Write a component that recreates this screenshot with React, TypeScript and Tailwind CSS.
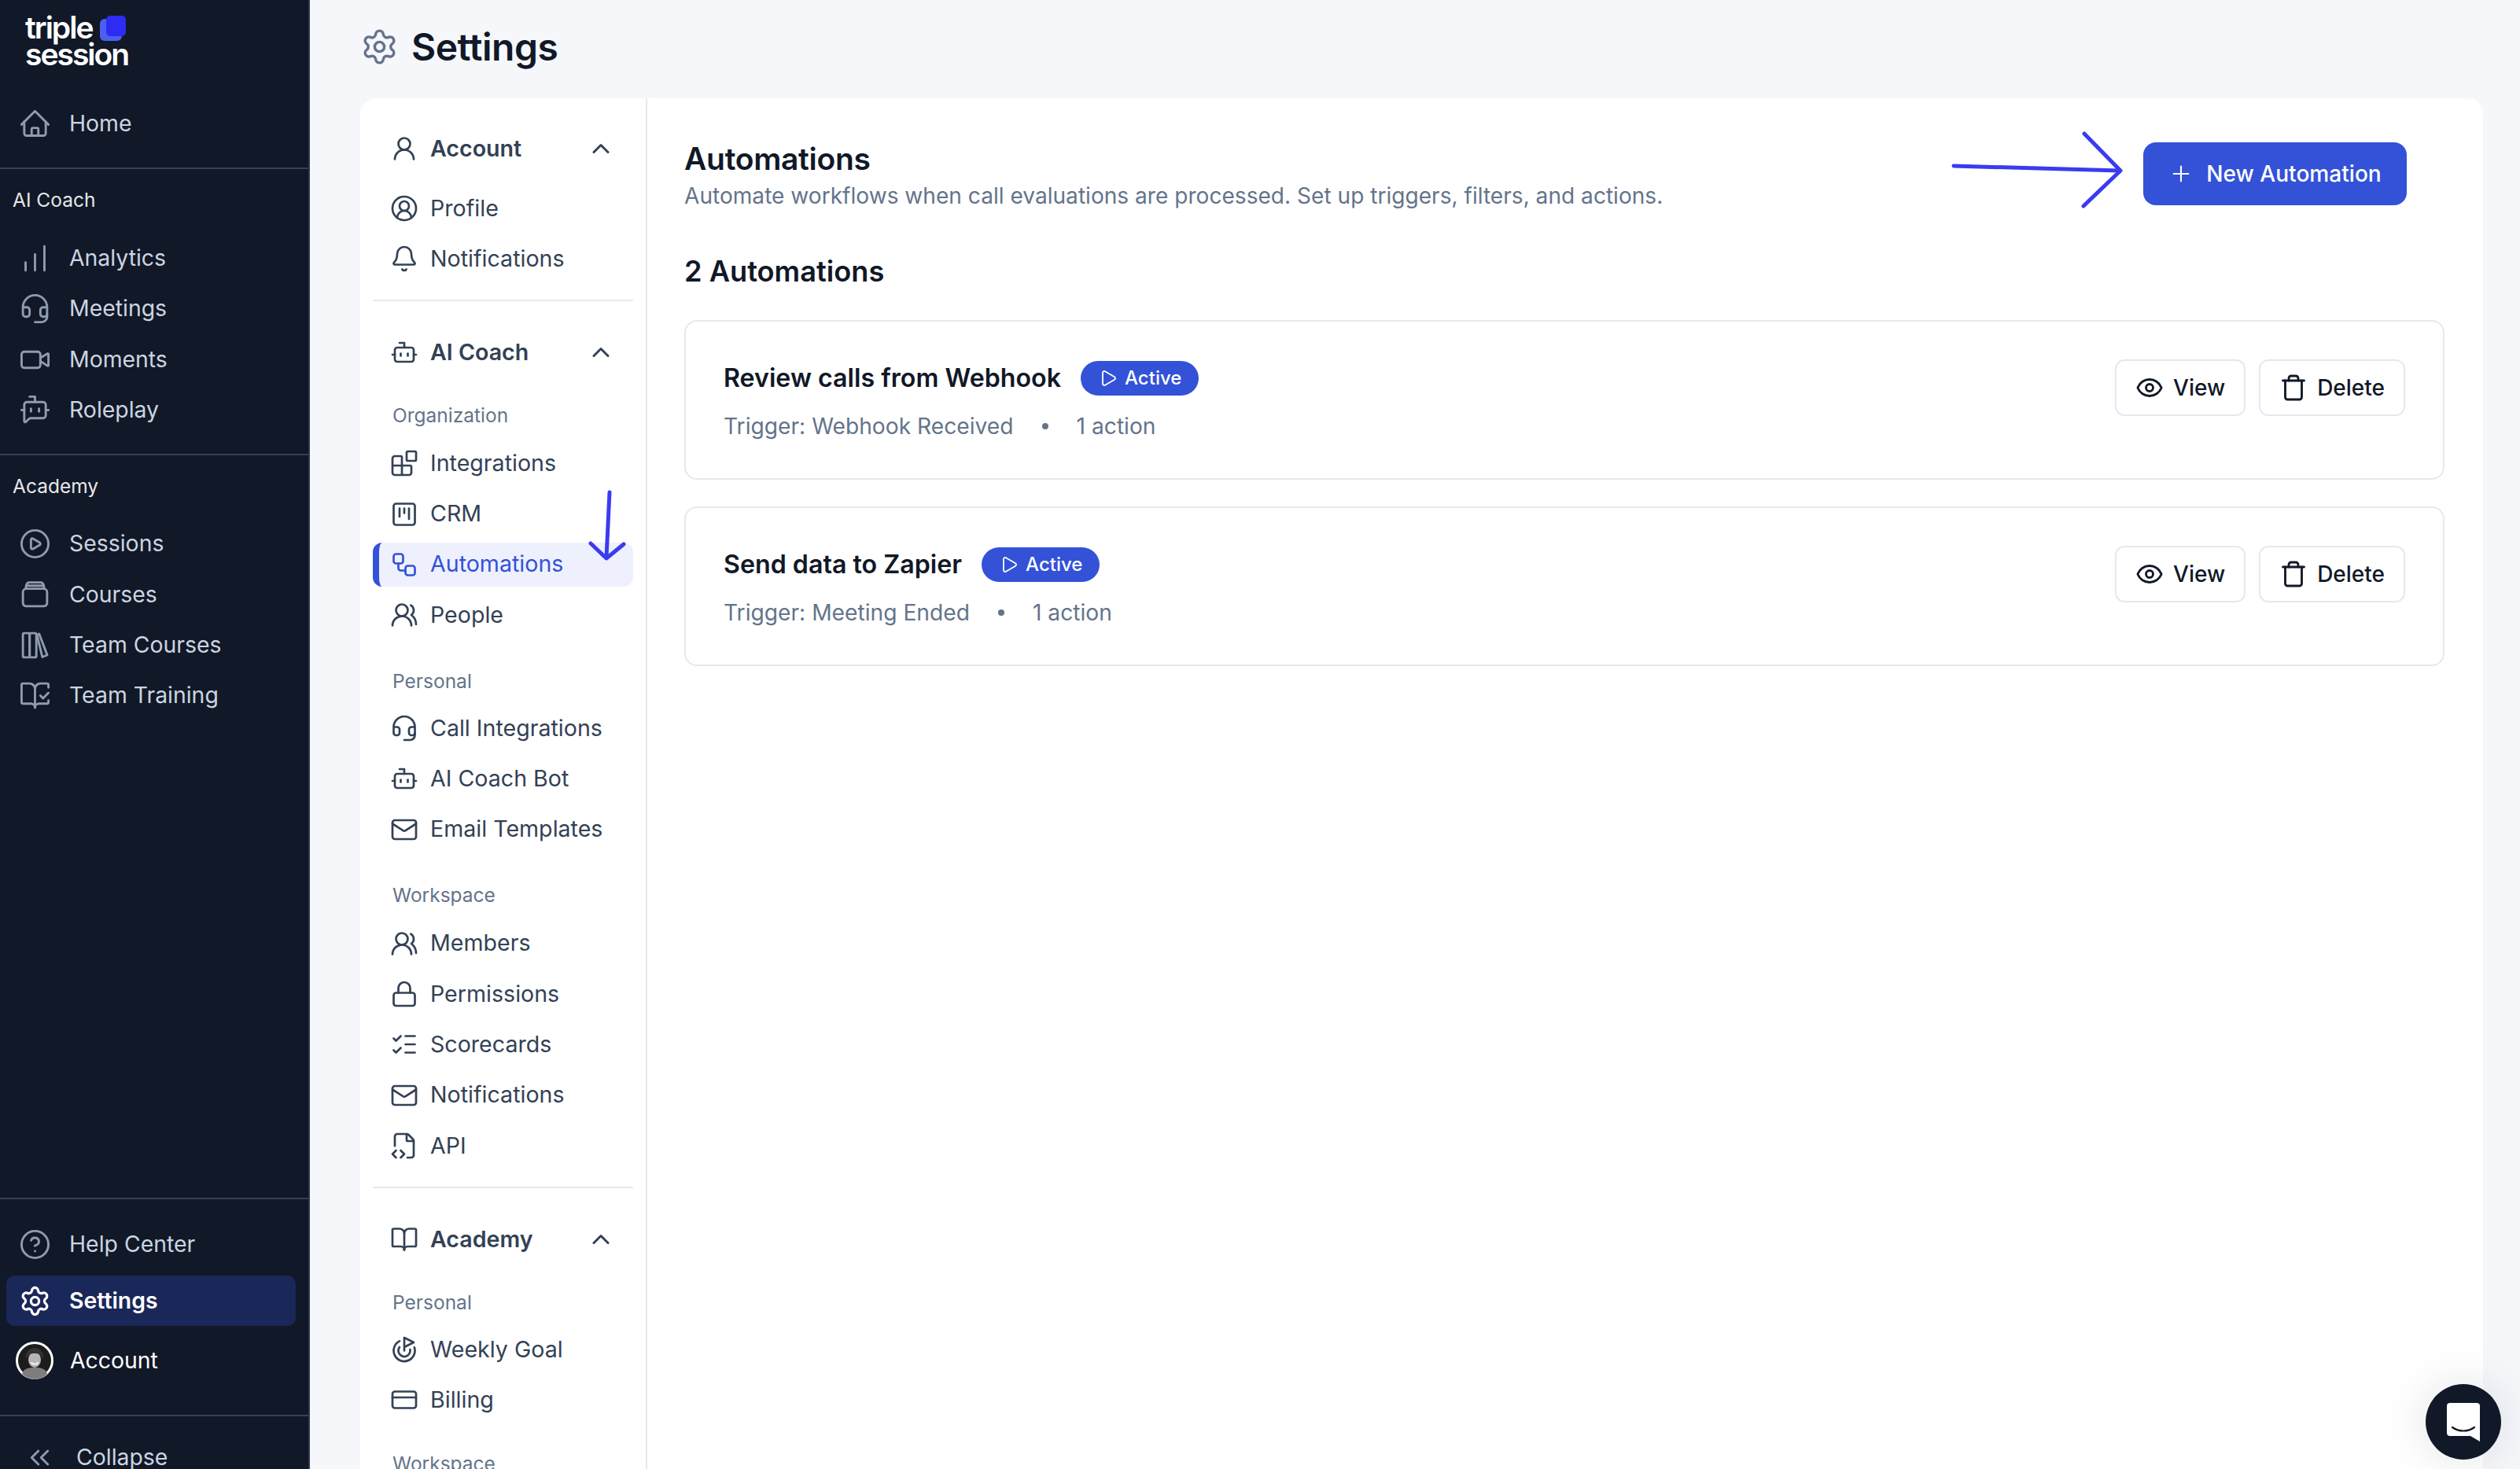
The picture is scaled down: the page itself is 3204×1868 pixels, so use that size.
import {
  BellIcon as Bell,
  Blocks,
  BookOpen,
  BookOpenCheck,
  Bot,
  BotMessageSquare,
  ChartNoAxesColumnIncreasing,
  ChevronUp,
  ChevronsLeft,
  CircleHelp,
  CirclePlay,
  CircleUserRound,
  CreditCard,
  Eye,
  FileCode2,
  Goal,
  Headset,
  ListChecks,
  Lock,
  Mail,
  Play,
  Plus,
  Settings,
  SquareKanban,
  Trash,
  UserRound,
  UsersRound,
  Video,
  Workflow,
} from 'lucide-react';
import type { ComponentType, SVGProps } from 'react';

type IconType = ComponentType<any>;

const HomeIcon = (props: SVGProps<SVGSVGElement>) => (
  <svg viewBox="0 0 24 24" fill="none" stroke="currentColor" strokeWidth={1.7} strokeLinecap="round" strokeLinejoin="round" {...props}>
    <path d="M2 12.500 12 2.500l10 10" />
    <path d="M4 10.500V19a1.800 1.800 0 0 0 1.800 1.800h12.400A1.800 1.800 0 0 0 20 19v-8.500" />
    <path d="M9.500 20.800V16a1 1 0 0 1 1-1h3a1 1 0 0 1 1 1v4.800" />
  </svg>
);

const CoursesIcon = (props: SVGProps<SVGSVGElement>) => (
  <svg viewBox="0 0 24 24" fill="none" stroke="currentColor" strokeWidth={1.7} strokeLinecap="round" strokeLinejoin="round" {...props}>
    <rect x="3" y="8" width="18" height="13" rx="2.5" />
    <path d="M5 8l.8-3.200A2 2 0 0 1 7.700 3.300h8.600a2 2 0 0 1 1.900 1.500L19 8" />
    <path d="M5.400 5.700h13.200" />
  </svg>
);

const BooksIcon = (props: SVGProps<SVGSVGElement>) => (
  <svg viewBox="0 0 24 24" fill="none" stroke="currentColor" strokeWidth={1.7} strokeLinecap="round" strokeLinejoin="round" {...props}>
    <rect x="3" y="3" width="5" height="18" rx="1" />
    <rect x="8" y="3" width="5" height="18" rx="1" />
    <path d="M13.500 4.500l1.600-1 6 15.800-3.600 1.500z" />
  </svg>
);

const DarkItem = ({ icon: Icon, label }: { icon: IconType; label: string }) => (
  <div className="flex h-[64.3px] items-center gap-[23px] pl-[24px]">
    <Icon className="h-[41px] w-[41px] shrink-0 text-[#8e9bb0]" strokeWidth={1.7} />
    <span className="text-[28.4px] text-[#cbd5e1]">{label}</span>
  </div>
);

const NavRow = ({ icon: Icon, label, active }: { icon: IconType; label: string; active?: boolean }) => (
  <div
    className={
      active
        ? 'flex h-[56px] items-center gap-[15px] rounded-[12px] border-l-[8px] border-[#3352d8] bg-[#eef1fd] pl-[14px] text-[#3352d8]'
        : 'flex h-[56px] items-center gap-[15px] pl-[22px] text-[#334155]'
    }
  >
    <Icon className="h-[36px] w-[36px] shrink-0" strokeWidth={1.8} />
    <span className="text-[28.6px]">{label}</span>
  </div>
);

const NavHeader = ({ icon: Icon, label }: { icon: IconType; label: string }) => (
  <div className="flex h-[56px] items-center gap-[15px] pl-[22px] pr-[23px] text-[#334155]">
    <Icon className="h-[36px] w-[36px] shrink-0" strokeWidth={1.8} />
    <span className="flex-1 text-[28.6px] font-semibold">{label}</span>
    <ChevronUp className="h-[36px] w-[36px]" strokeWidth={2} />
  </div>
);

const NavLabel = ({ text, className }: { text: string; className: string }) => (
  <div className={`h-[28px] pl-[25px] text-[24.5px] leading-[28px] text-[#64748b] ${className}`}>{text}</div>
);

const NavGroup = ({ items }: { items: { icon: IconType; label: string; active?: boolean }[] }) => (
  <div className="flex flex-col gap-[8.3px]">
    {items.map((item) => (
      <NavRow key={item.label} {...item} />
    ))}
  </div>
);

const AutomationCard = ({ title, trigger }: { title: string; trigger: string }) => (
  <div className="flex h-[203px] justify-between rounded-[16px] border-2 border-[#e5e8f0] pl-[48px] pr-[48px] pt-[48px]">
    <div>
      <div className="flex h-[48px] items-center gap-[25px]">
        <span className="text-[32.2px] font-semibold text-[#111827]">{title}</span>
        <span className="flex h-[44px] items-center gap-[9px] rounded-full bg-[#3352d8] pl-[23px] pr-[22px] text-[24px] font-medium text-white">
          <Play className="h-[24px] w-[24px]" strokeWidth={1.8} />
          Active
        </span>
      </div>
      <div className="mt-[17px] flex items-center text-[28.2px] leading-[40px] text-[#64748b]">
        <span>{trigger}</span>
        <span className="mx-[36px] h-[8px] w-[8px] rounded-full bg-[#64748b]" />
        <span>1 action</span>
      </div>
    </div>
    <div className="flex h-[72px] gap-[17px]">
      <button className="flex items-center gap-[12px] rounded-[12px] border-2 border-[#e5e8f0] px-[24px] text-[28px] font-medium text-[#111827]">
        <Eye className="h-[36px] w-[36px]" strokeWidth={1.9} />
        View
      </button>
      <button className="flex items-center gap-[12px] rounded-[12px] border-2 border-[#e5e8f0] px-[24px] text-[28px] font-medium text-[#111827]">
        <Trash className="h-[36px] w-[36px]" strokeWidth={1.9} />
        Delete
      </button>
    </div>
  </div>
);

const App = () => {
  return (
    <div className="relative flex h-[1868px] w-[3204px] overflow-hidden bg-[#f5f7fb] [font-family:Inter,sans-serif]">
      {/* Dark sidebar */}
      <aside className="flex h-full w-[394px] shrink-0 flex-col border-r-2 border-[#2b3649] bg-[#111827]">
        <div className="min-h-0 flex-1">
          <div className="h-[125px] pl-[32px] pt-[18px]">
            <div className="flex items-start gap-[10px] text-[39px] font-semibold leading-[34px] tracking-[-2px] text-white">
              triple
              <svg viewBox="0 0 33 32" className="mt-[2px] h-[32px] w-[33px]">
                <rect x="0" y="4" width="28" height="28" rx="6" fill="#4a60f0" />
                <rect x="8" y="0" width="25" height="26" rx="5" fill="#2e2bf2" />
              </svg>
            </div>
            <div className="text-[39px] font-semibold leading-[34px] tracking-[-2px] text-white">session</div>
          </div>
          <DarkItem icon={HomeIcon} label="Home" />
          <div className="mt-[24px] border-t-2 border-[#374151]" />
          <div className="pl-[16px] pt-[24px] text-[24.5px] leading-[30px] text-[#e5e7eb]">AI Coach</div>
          <div className="mt-[27px]">
            <DarkItem icon={ChartNoAxesColumnIncreasing} label="Analytics" />
            <DarkItem icon={Headset} label="Meetings" />
            <DarkItem icon={Video} label="Moments" />
            <DarkItem icon={BotMessageSquare} label="Roleplay" />
          </div>
          <div className="mt-[24px] border-t-2 border-[#374151]" />
          <div className="pl-[16px] pt-[24px] text-[24.5px] leading-[30px] text-[#e5e7eb]">Academy</div>
          <div className="mt-[26px]">
            <DarkItem icon={CirclePlay} label="Sessions" />
            <DarkItem icon={CoursesIcon} label="Courses" />
            <DarkItem icon={BooksIcon} label="Team Courses" />
            <DarkItem icon={BookOpenCheck} label="Team Training" />
          </div>
        </div>
        <div className="h-[345px] shrink-0 overflow-hidden border-t-2 border-[#374151]">
          <div className="mt-[25px]">
            <DarkItem icon={CircleHelp} label="Help Center" />
          </div>
          <div className="ml-[8px] mr-[16px] mt-[8px] flex h-[64px] items-center gap-[23px] rounded-[10px] bg-[#1a2759] pl-[16px]">
            <Settings className="h-[41px] w-[41px] text-white" strokeWidth={1.9} />
            <span className="text-[28.4px] font-semibold text-white">Settings</span>
          </div>
          <div className="mt-[12px] flex h-[64px] items-center gap-[21px] pl-[20px]">
            <svg viewBox="0 0 48 48" className="h-[48px] w-[48px] shrink-0">
              <circle cx="24" cy="24" r="22.500" fill="#1c1c1c" stroke="#fff" strokeWidth="3" />
              <path d="M8 41c2-7 8-8 16-8s14 1 16 8a22 22 0 0 1-32 0z" fill="#7d7d7d" />
              <ellipse cx="24" cy="23" rx="8" ry="10" fill="#b5b5b5" />
              <path d="M13 23c-2-10 6-15 11-15s13 5 11 15c-2-6-5-8-11-8s-9 2-11 8z" fill="#333" />
              <path d="M19.500 26.500c2.500 3 6.500 3 9 0" stroke="#f4f4f4" strokeWidth="2.200" fill="none" />
            </svg>
            <span className="text-[28.4px] text-white">Account</span>
          </div>
          <div className="mt-[37px] border-t-2 border-[#374151]" />
          <div className="mt-[20px] flex h-[64px] items-center gap-[26px] pl-[30px]">
            <ChevronsLeft className="h-[41px] w-[41px] text-[#8e9bb0]" strokeWidth={1.7} />
            <span className="text-[28.4px] text-[#cbd5e1]">Collapse</span>
          </div>
        </div>
      </aside>

      {/* Main */}
      <main className="flex min-w-0 flex-1 flex-col pl-[64px] pr-[47px]">
        <div className="flex h-[125px] shrink-0 items-center gap-[16px] pb-[6px]">
          <Settings className="h-[49px] w-[49px] text-[#64748b]" strokeWidth={1.7} />
          <h1 className="text-[48px] font-semibold tracking-[-0.5px] text-[#111827]">Settings</h1>
        </div>

        <div className="flex min-h-0 flex-1 overflow-hidden rounded-t-[20px] bg-white">
          {/* Settings nav */}
          <nav className="h-full w-[365px] shrink-0 overflow-hidden border-r-2 border-[#e5e8f0] px-[16px] pt-[36px]">
            <NavHeader icon={UserRound} label="Account" />
            <div className="mt-[20px]">
              <NavGroup
                items={[
                  { icon: CircleUserRound, label: 'Profile' },
                  { icon: Bell, label: 'Notifications' },
                ]}
              />
            </div>
            <div className="mt-[24px] border-t-2 border-[#e5e8f0]" />
            <div className="mt-[37px]">
              <NavHeader icon={Bot} label="AI Coach" />
            </div>
            <NavLabel text="Organization" className="mt-[38px]" />
            <div className="mt-[19px]">
              <NavGroup
                items={[
                  { icon: Blocks, label: 'Integrations' },
                  { icon: SquareKanban, label: 'CRM' },
                  { icon: Workflow, label: 'Automations', active: true },
                  { icon: UsersRound, label: 'People' },
                ]}
              />
            </div>
            <NavLabel text="Personal" className="mt-[42px]" />
            <div className="mt-[18px]">
              <NavGroup
                items={[
                  { icon: Headset, label: 'Call Integrations' },
                  { icon: Bot, label: 'AI Coach Bot' },
                  { icon: Mail, label: 'Email Templates' },
                ]}
              />
            </div>
            <NavLabel text="Workspace" className="mt-[41px]" />
            <div className="mt-[20px]">
              <NavGroup
                items={[
                  { icon: UsersRound, label: 'Members' },
                  { icon: Lock, label: 'Permissions' },
                  { icon: ListChecks, label: 'Scorecards' },
                  { icon: Mail, label: 'Notifications' },
                  { icon: FileCode2, label: 'API' },
                ]}
              />
            </div>
            <div className="mt-[24px] border-t-2 border-[#e5e8f0]" />
            <div className="mt-[37px]">
              <NavHeader icon={BookOpen} label="Academy" />
            </div>
            <NavLabel text="Personal" className="mt-[38px]" />
            <div className="mt-[18px]">
              <NavGroup
                items={[
                  { icon: Goal, label: 'Weekly Goal' },
                  { icon: CreditCard, label: 'Billing' },
                ]}
              />
            </div>
            <NavLabel text="Workspace" className="mt-[39px]" />
          </nav>

          {/* Content */}
          <section className="min-w-0 flex-1 pl-[47px] pr-[49px] pt-[51px]">
            <div className="flex items-start justify-between pr-[48px]">
              <div>
                <h2 className="text-[39px] font-semibold leading-[52px] tracking-[-0.3px] text-[#111827]">Automations</h2>
                <p className="text-[28.1px] leading-[42px] text-[#64748b]">
                  Automate workflows when call evaluations are processed. Set up triggers, filters, and actions.
                </p>
              </div>
              <button className="mt-[5px] flex h-[80px] w-[335px] items-center justify-center gap-[16px] rounded-[16px] bg-[#3352d8] text-[28.1px] font-medium text-white">
                <Plus className="h-[32px] w-[32px]" strokeWidth={1.6} />
                New Automation
              </button>
            </div>
            <h3 className="mt-[53px] text-[36.2px] font-semibold leading-[44px] text-[#111827]">2 Automations</h3>
            <div className="mt-[40px] flex flex-col gap-[34px]">
              <AutomationCard title="Review calls from Webhook" trigger="Trigger: Webhook Received" />
              <AutomationCard title="Send data to Zapier" trigger="Trigger: Meeting Ended" />
            </div>
          </section>
        </div>
      </main>

      {/* Hand-drawn annotation arrows */}
      <svg className="absolute left-[2480px] top-[165px] h-[102px] w-[222px]" viewBox="0 0 222 102" fill="none" stroke="#3b3bf0" strokeWidth="5" strokeLinecap="round" strokeLinejoin="round">
        <path d="M4 46 L215 52" />
        <path d="M170 5 L216 52 L169 97" />
      </svg>
      <svg className="absolute left-[745px] top-[620px] h-[96px] w-[54px]" viewBox="0 0 54 96" fill="none" stroke="#3b3bf0" strokeWidth="5" strokeLinecap="round" strokeLinejoin="round">
        <path d="M30 6 L26 89" />
        <path d="M6 71 L26 90 L48 72" />
      </svg>

      {/* Chat bubble */}
      <div className="absolute bottom-[12px] right-[24px] flex h-[96px] w-[96px] items-center justify-center rounded-full bg-[#111827] shadow-[0_0_60px_rgba(15,23,42,0.12)]">
        <svg viewBox="0 0 42 49" className="h-[49px] w-[42px]">
          <path d="M4 0h34a4 4 0 0 1 4 4v45l-12-7H4a4 4 0 0 1-4-4V4a4 4 0 0 1 4-4z" fill="#fff" />
          <path d="M7 31c8 6 20 6 28 0" fill="none" stroke="#111827" strokeWidth="2.200" strokeLinecap="round" />
        </svg>
      </div>
    </div>
  );
};

export default App;
